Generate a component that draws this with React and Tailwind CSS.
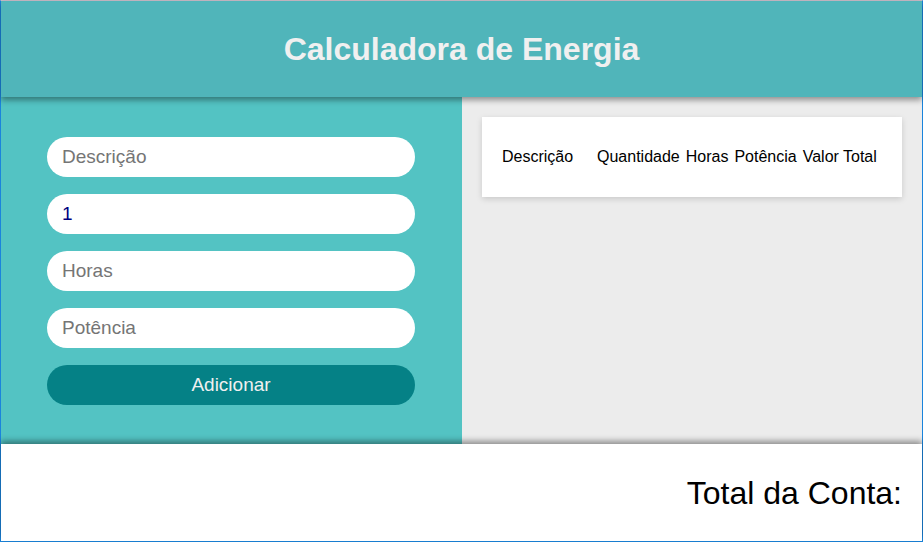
import React from 'react';

const font = { fontFamily: '"Liberation Sans", Arial, sans-serif' };

const Field = ({ placeholder, value }) => (
    <input
        type="text"
        placeholder={placeholder}
        defaultValue={value}
        className="h-10 w-full rounded-full bg-white px-[15px] text-[19px] text-[#000080] placeholder:text-[#757575] outline-none"
    />
);

const columns = ['Quantidade', 'Horas', 'Potência', 'Valor Total'];

export default function App() {
    return (
        <div
            className="flex h-[542px] w-[923px] flex-col border border-[#1a84dc] border-t-[#cbbcc8] bg-white"
            style={font}
        >
            <header className="relative z-10 flex h-[96px] shrink-0 items-center justify-center bg-[#50b5ba] shadow-[0_3px_6px_rgba(0,0,0,0.4)]">
                <h1 className="text-[32px] font-bold text-[#f0f0f0]">Calculadora de Energia</h1>
            </header>

            <main className="flex h-[347px] shrink-0">
                {/* formulário */}
                <section className="flex w-[461px] flex-col gap-[17px] bg-[#53c3c3] pl-[46px] pr-[47px] pt-[40px]">
                    <Field placeholder="Descrição" />
                    <Field value="1" />
                    <Field placeholder="Horas" />
                    <Field placeholder="Potência" />
                    <button className="h-10 w-full rounded-full bg-[#058186] text-[19px] text-[#f0f0f0]">
                        Adicionar
                    </button>
                </section>

                {/* tabela */}
                <section className="flex-1 bg-[#ececec] px-5 pt-5">
                    <div className="flex h-20 items-center bg-white px-5 text-[16px] text-black shadow-[0_2px_6px_rgba(0,0,0,0.15)]">
                        <span className="w-[95px]">Descrição</span>
                        <div className="flex gap-[6px]">
                            {columns.map((c) => (
                                <span key={c}>{c}</span>
                            ))}
                        </div>
                    </div>
                </section>
            </main>

            <footer className="relative z-10 flex flex-1 items-center justify-end bg-white pr-5 shadow-[0_-3px_6px_rgba(0,0,0,0.4)]">
                <span className="text-[32px] text-black">Total da Conta:</span>
            </footer>
        </div>
    );
}
